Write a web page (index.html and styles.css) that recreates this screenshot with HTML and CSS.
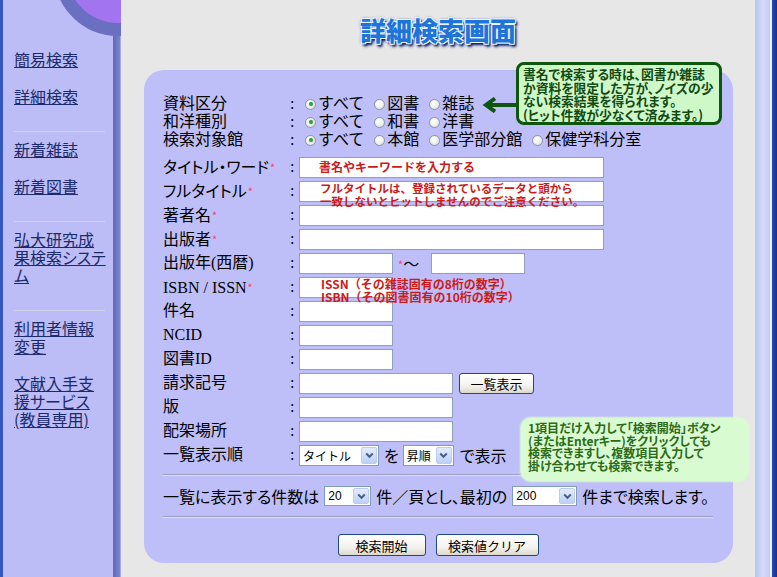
FILE: index.html
```html
<!DOCTYPE html>
<html lang="ja">
<head>
<meta charset="utf-8">
<title>詳細検索画面</title>
<link rel="stylesheet" href="styles.css">
</head>
<body>
<div class="frame">
  <div class="edge-left"></div>
  <nav class="sidebar">
    <div class="orb"></div>
    <div class="nav-group">
      <a href="#">簡易検索</a>
      <a href="#">詳細検索</a>
    </div>
    <hr class="nav-sep">
    <div class="nav-group">
      <a href="#">新着雑誌</a>
      <a href="#">新着図書</a>
    </div>
    <hr class="nav-sep">
    <div class="nav-group">
      <a href="#">弘大研究成<br>果検索システ<br>ム</a>
    </div>
    <hr class="nav-sep">
    <div class="nav-group">
      <a href="#">利用者情報<br>変更</a>
      <a href="#">文献入手支<br>援サービス<br>(教員専用)</a>
    </div>
  </nav>
  <main class="main">
    <h1 class="title">詳細検索画面</h1>
    <form class="panel">
      <div class="tip tip-top">
        <svg class="tip-arrow" width="34" height="16" viewBox="0 0 34 16"><path d="M5 8 H34" stroke="#0d560d" stroke-width="4" fill="none"/><path d="M13 1.5 L4 8 L13 14.5" stroke="#0d560d" stroke-width="4" fill="none" stroke-linejoin="miter"/></svg>
        書名で検索する時は、図書か雑誌<br>か資料を限定した方が、ノイズの少<br>ない検索結果を得られます。<br>(ヒット件数が少なくて済みます。)
      </div>
      <div class="tip tip-bottom">
        1項目だけ入力して「検索開始」ボタン<br>(またはEnterキー)をクリックしても<br>検索できますし、複数項目入力して<br>掛け合わせても検索できます。
      </div>

      <div class="radio-rows">
        <div class="row row-radio">
          <span class="label">資料区分</span><span class="colon">:</span>
          <span class="field">
            <span class="opt"><span class="radio on"></span>すべて</span>
            <span class="opt"><span class="radio"></span>図書</span>
            <span class="opt"><span class="radio"></span>雑誌</span>
          </span>
        </div>
        <div class="row row-radio">
          <span class="label">和洋種別</span><span class="colon">:</span>
          <span class="field">
            <span class="opt"><span class="radio on"></span>すべて</span>
            <span class="opt"><span class="radio"></span>和書</span>
            <span class="opt"><span class="radio"></span>洋書</span>
          </span>
        </div>
        <div class="row row-radio">
          <span class="label">検索対象館</span><span class="colon">:</span>
          <span class="field">
            <span class="opt"><span class="radio on"></span>すべて</span>
            <span class="opt"><span class="radio"></span>本館</span>
            <span class="opt"><span class="radio"></span>医学部分館</span>
            <span class="opt"><span class="radio"></span>保健学科分室</span>
          </span>
        </div>
      </div>

      <div class="row">
        <span class="label">タイトル・ワード<span class="req">*</span></span><span class="colon">:</span>
        <span class="field"><span class="text w-long"></span><span class="hint hint-title">書名やキーワードを入力する</span></span>
      </div>
      <div class="row">
        <span class="label">フルタイトル<span class="req">*</span></span><span class="colon">:</span>
        <span class="field"><span class="text w-long"></span><span class="hint hint-full">フルタイトルは、登録されているデータと頭から<br>一致しないとヒットしませんのでご注意ください。</span></span>
      </div>
      <div class="row">
        <span class="label">著者名<span class="req">*</span></span><span class="colon">:</span>
        <span class="field"><span class="text w-long"></span></span>
      </div>
      <div class="row">
        <span class="label">出版者<span class="req">*</span></span><span class="colon">:</span>
        <span class="field"><span class="text w-long"></span></span>
      </div>
      <div class="row">
        <span class="label">出版年(西暦)</span><span class="colon">:</span>
        <span class="field"><span class="text w-short"></span><span class="range"><span class="req">*</span>～</span><span class="text w-short"></span></span>
      </div>
      <div class="row">
        <span class="label">ISBN / ISSN<span class="req">*</span></span><span class="colon">:</span>
        <span class="field"><span class="text w-short"></span><span class="hint hint-isbn">ISSN（その雑誌固有の8桁の数字）<br>ISBN（その図書固有の10桁の数字）</span></span>
      </div>
      <div class="row">
        <span class="label">件名</span><span class="colon">:</span>
        <span class="field"><span class="text w-short"></span></span>
      </div>
      <div class="row">
        <span class="label">NCID</span><span class="colon">:</span>
        <span class="field"><span class="text w-short"></span></span>
      </div>
      <div class="row">
        <span class="label">図書ID</span><span class="colon">:</span>
        <span class="field"><span class="text w-short"></span></span>
      </div>
      <div class="row">
        <span class="label">請求記号</span><span class="colon">:</span>
        <span class="field"><span class="text w-mid"></span><span class="btn btn-list">一覧表示</span></span>
      </div>
      <div class="row">
        <span class="label">版</span><span class="colon">:</span>
        <span class="field"><span class="text w-mid"></span></span>
      </div>
      <div class="row">
        <span class="label">配架場所</span><span class="colon">:</span>
        <span class="field"><span class="text w-mid"></span></span>
      </div>
      <div class="row">
        <span class="label">一覧表示順</span><span class="colon">:</span>
        <span class="field">
          <span class="combo w-sort"><span class="combo-val">タイトル</span><span class="combo-btn"><svg width="9" height="7" viewBox="0 0 9 7"><path d="M1.2 1.5 L4.5 4.8 L7.8 1.5" stroke="#4a5f8c" stroke-width="2" fill="none"/></svg></span></span>
          <span class="word word-wo">を</span>
          <span class="combo w-order"><span class="combo-val">昇順</span><span class="combo-btn"><svg width="9" height="7" viewBox="0 0 9 7"><path d="M1.2 1.5 L4.5 4.8 L7.8 1.5" stroke="#4a5f8c" stroke-width="2" fill="none"/></svg></span></span>
          <span class="word word-show">で表示</span>
        </span>
      </div>

      <hr class="rule rule-top">
      <div class="count-row">
        一覧に表示する件数は
        <span class="combo w-num"><span class="combo-val num">20</span><span class="combo-btn"><svg width="9" height="7" viewBox="0 0 9 7"><path d="M1.2 1.5 L4.5 4.8 L7.8 1.5" stroke="#4a5f8c" stroke-width="2" fill="none"/></svg></span></span>
        件／頁とし、最初の
        <span class="combo w-max"><span class="combo-val num">200</span><span class="combo-btn"><svg width="9" height="7" viewBox="0 0 9 7"><path d="M1.2 1.5 L4.5 4.8 L7.8 1.5" stroke="#4a5f8c" stroke-width="2" fill="none"/></svg></span></span>
        件まで検索します。
      </div>
      <hr class="rule">
      <div class="actions">
        <span class="btn btn-go">検索開始</span>
        <span class="btn btn-clear">検索値クリア</span>
      </div>
    </form>
  </main>
  <div class="edge-right"></div>
</div>
</body>
</html>
```
FILE: styles.css
```css
* { box-sizing: border-box; }
html, body { margin: 0; padding: 0; }
body {
  width: 777px;
  height: 577px;
  overflow: hidden;
  background: #e7e7e7;
  color: #000;
  font-family: "Liberation Serif", "Noto Sans CJK JP", serif;
  font-size: 16px;
  font-feature-settings: "palt";
}
.frame { display: flex; height: 577px; }

.edge-left { flex: none; width: 3px; background: #3357bf; }
.edge-right {
  flex: none;
  width: 22px;
  background: linear-gradient(to right, #b8c2ee 0, #d5dbf8 8px, #c4ccf2 15px, #eef0fc 15px, #eef0fc 17px, #2b49b2 17px, #14309c 22px);
}

/* sidebar */
.sidebar {
  flex: none;
  width: 118px;
  position: relative;
  overflow: hidden;
  padding: 50px 0 0 11px;
  background: linear-gradient(to right, #bcbcf6 0, #bcbcf6 110px, #6468b9 110px, #7c82cf 117px, #a9aee2 117px);
  font-family: "Noto Sans CJK JP", sans-serif;
}
.orb {
  position: absolute;
  left: 51px;
  top: -92px;
  width: 128px;
  height: 128px;
  border-radius: 50%;
  border: 13px solid #6a6fc1;
  background: #a274f0;
}
.nav-group { display: flex; flex-direction: column; gap: 19px; }
.nav-group a {
  color: #1b2a6b;
  font-size: 16px;
  line-height: 18px;
  text-decoration: underline;
}
.nav-sep {
  width: 91px;
  margin: 26px 0 8px;
  border: 0;
  height: 1px;
  background: #d2d2e6;
}

/* main */
.main { flex: 1; display: flex; flex-direction: column; min-width: 0; }
.title {
  margin: 15px 0 25px;
  text-align: center;
  font: 900 26px/30px "Noto Sans CJK JP", sans-serif;
  font-feature-settings: normal;
  color: #1f74d8;
  text-shadow:
    -1px -1px 0 #e8f4ff, 1px -1px 0 #e8f4ff, -1px 1px 0 #e8f4ff, 1px 1px 0 #e8f4ff,
    0 0 3px #0a2f86, 2px 2px 2px #0a2060, 2px 3px 3px #1a2a70;
}

.panel {
  position: relative;
  margin: 0 22px 0 23px;
  padding: 25px 20px 7px 19px;
  background: #bebef8;
  border-radius: 20px;
}

.radio-rows { margin-bottom: 6px; }
.row { display: flex; align-items: center; height: 24px; }
.row.row-radio { height: 18px; }
.label { flex: none; width: 127px; line-height: 18px; white-space: nowrap; }
.colon { flex: none; width: 9px; line-height: 18px; }
.field { position: relative; display: flex; align-items: center; height: 100%; }
.req { color: #ff4070; font-size: 11px; font-family: "Noto Sans CJK JP", sans-serif; margin-left: 1px; vertical-align: 1px; }

.opt { display: inline-flex; align-items: center; line-height: 18px; margin-right: 10px; font-feature-settings: normal; }
.opt:first-child { margin-left: 6px; }
.radio {
  position: relative;
  width: 11px;
  height: 11px;
  margin-right: 2px;
  border-radius: 50%;
  border: 1px solid #8796ad;
  background: radial-gradient(circle at 40% 35%, #ffffff 0, #f2f2ee 45%, #d6d6d0 100%);
}
.radio.on::after {
  content: "";
  position: absolute;
  left: 2.5px;
  top: 2.5px;
  width: 4px;
  height: 4px;
  border-radius: 50%;
  background: #3a9c3a;
  box-shadow: 0 0 1px #7ccc7c;
}

.text { display: block; height: 21px; background: #fff; border: 1px solid #909eb6; }
.w-long { width: 305px; }
.w-short { width: 94px; }
.w-mid { width: 154px; }
.range { width: 38px; padding-left: 4px; line-height: 18px; font-family: "Noto Sans CJK JP", sans-serif; }

.hint {
  position: absolute;
  z-index: 2;
  color: #cc1a1a;
  font: 700 12px/13px "Noto Sans CJK JP", sans-serif;
  font-feature-settings: normal;
  white-space: nowrap;
}
.hint-title { left: 20px; top: 5px; }
.hint-full { left: 21px; top: 3px; font-size: 11.5px; }
.hint-isbn { left: 22px; top: 2px; }

.btn {
  display: inline-flex;
  align-items: center;
  justify-content: center;
  height: 22px;
  border: 1px solid #1f4a7a;
  border-radius: 3px;
  background: linear-gradient(#ffffff 0, #f4f3ee 60%, #dcd8cc 100%);
  font: 13px/1 "Noto Sans CJK JP", sans-serif;
  color: #000;
}
.btn-list { width: 75px; height: 21px; margin-left: 6px; }
.btn-go { width: 88px; }
.btn-clear { width: 103px; }

.combo {
  display: inline-flex;
  height: 21px;
  padding: 1px;
  border: 1px solid #7f9db9;
  background: #fff;
}
.combo-val {
  flex: 1;
  padding-left: 2px;
  font: 12px/17px "Noto Sans CJK JP", sans-serif;
  white-space: nowrap;
  overflow: hidden;
}
.combo-val.num { font-family: "Liberation Sans", sans-serif; font-size: 12px; }
.combo-btn {
  flex: none;
  width: 16px;
  display: flex;
  align-items: center;
  justify-content: center;
  border: 1px solid #bccbee;
  border-radius: 2px;
  background: linear-gradient(#e4ecfd, #bdd0f6);
}
.w-sort { width: 80px; }
.w-order { width: 51px; }
.w-num { width: 47px; height: 20px; }
.w-max { width: 65px; height: 20px; }
.word { line-height: 18px; font-family: "Noto Sans CJK JP", sans-serif; }
.word-wo { margin: 0 4px 0 5px; }
.word-show { margin-left: 6px; }

.rule {
  margin: 0;
  height: 2px;
  border: 0;
  border-top: 1px solid #9c9cc6;
  border-bottom: 1px solid #dedefc;
}
.rule-top { margin-top: 7px; }
.count-row {
  display: flex;
  align-items: center;
  gap: 5px;
  height: 40px;
  font-family: "Noto Sans CJK JP", sans-serif;
  white-space: nowrap;
}
.actions { display: flex; justify-content: center; gap: 10px; margin-top: 16px; }

/* tooltips */
.tip {
  position: absolute;
  z-index: 3;
  font: 700 12.8px/13.5px "Noto Sans CJK JP", sans-serif;
  font-feature-settings: "palt";
  white-space: nowrap;
}
.tip-top {
  left: 372px;
  top: -8px;
  width: 206px;
  height: 63px;
  padding: 2px 0 0 4px;
  border: 3px solid #0d560d;
  border-radius: 8px;
  background: #cff8c8;
  color: #124a12;
}
.tip-arrow { position: absolute; left: -37px; top: 32px; }
.tip-bottom {
  left: 377px;
  top: 348px;
  width: 227px;
  height: 63px;
  padding: 4px 0 0 7px;
  border-radius: 10px;
  background: #d9fbd2;
  box-shadow: 0 0 2px 1px #d9fbd2;
  color: #2b6a16;
  font-size: 12px;
  line-height: 12.5px;
}
```
